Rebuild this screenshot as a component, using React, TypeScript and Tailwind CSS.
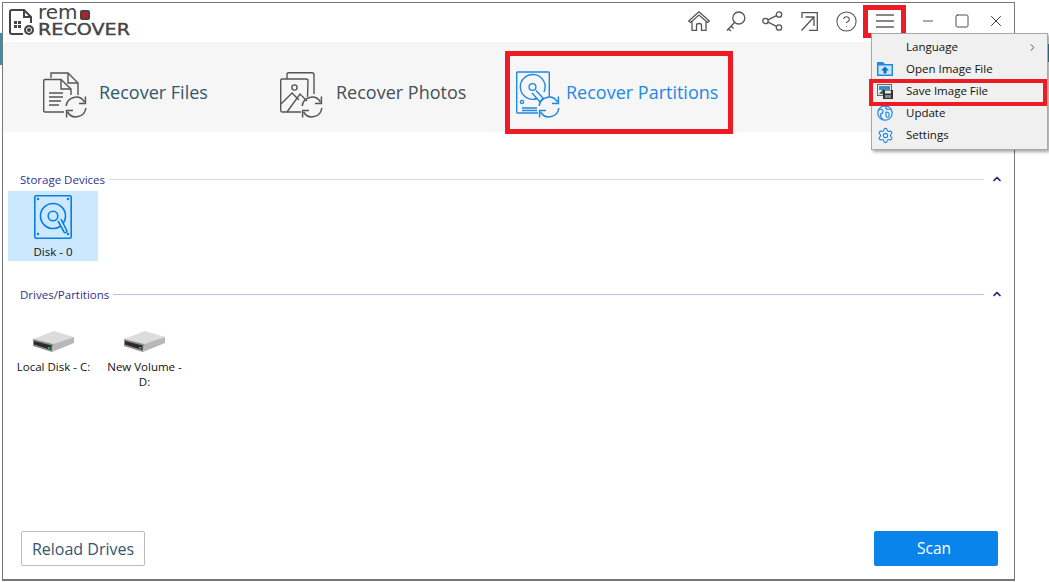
import React from 'react';
import { ChevronRight, ChevronUp, CircleHelp, Minus, Settings, Square, X } from 'lucide-react';

const font = "font-['Open_Sans','Noto_Sans',sans-serif]";

function Sync({ cx, cy, r, color }: { cx: number; cy: number; r: number; color: string }) {
  return (
    <g transform={`translate(${cx} ${cy}) scale(${r / 10})`} fill="none" stroke={color} strokeWidth="1.5">
      <path d="M-9.8 -1 A9.8 9.8 0 0 1 8.4 -5" />
      <path d="M9.4 -10.5 V-3.4 H3" />
      <path d="M9.8 1 A9.8 9.8 0 0 1 -8.4 5" />
      <path d="M-9.4 10.5 V3.4 H-3" />
    </g>
  );
}

function FilesIcon() {
  return (
    <svg width="44" height="46" viewBox="0 0 44 46" fill="none" stroke="#555" strokeWidth="1.4" className="mt-[5px] shrink-0">
      <path d="M8 6 V1 H25 L35 11 V23" />
      <path d="M25 1 V11 H35" />
      <path d="M21 40 H2 Q0.7 40 0.7 38 V9 Q0.7 7.5 2 7.5 H18 L28 17 V23" />
      <path d="M18 7.5 V17 H28" />
      <path d="M6 21 H20 M6 25 H20 M6 29 H18 M6 33 H16" />
      <Sync cx={33} cy={35} r={10} color="#555" />
    </svg>
  );
}

function PhotosIcon() {
  return (
    <svg width="44" height="46" viewBox="0 0 44 46" fill="none" stroke="#555" strokeWidth="1.4" className="mt-[5px] shrink-0">
      <path d="M7 7 V2 Q7 0.7 8.5 0.7 H32 Q34 0.7 34 2.5 V22" />
      <path d="M27.5 25 L28 8.5 Q28 7 26 7 H2 Q0.7 7 0.7 8.5 V38 Q0.7 40 2 40 H21" />
      <path d="M1 32 L12 21 L19 28 M7 40 L20 22 L27 29" />
      <circle cx="14.5" cy="15.5" r="2.6" />
      <Sync cx={32} cy={35} r={10} color="#555" />
    </svg>
  );
}

function PartitionIcon() {
  return (
    <svg width="45" height="48" viewBox="0 0 45 48" fill="none" stroke="#1e88e5" strokeWidth="1.4" className="mt-[5px] shrink-0">
      <path d="M22 42 H1.5 Q0.7 42 0.7 41 V2 Q0.7 1 1.5 1 H32.5 Q33.3 1 33.3 2 V26" />
      <path d="M21 27.5 A12.4 12.4 0 1 1 28 21" />
      <circle cx="16.5" cy="16" r="3.4" />
      <path d="M16 22 L24 31 L27 27 L20 19.5" />
      <circle cx="6" cy="31" r="1.6" />
      <path d="M6 37 H21 M6 39.5 H21" />
      <Sync cx={33} cy={36} r={10} color="#1e88e5" />
    </svg>
  );
}

function DiskIcon() {
  return (
    <svg width="38" height="44" viewBox="0 0 38 44" fill="none" stroke="#0b7de0" strokeWidth="1.6">
      <rect x="0.8" y="0.8" width="36.4" height="42.4" rx="1.5" />
      <circle cx="19" cy="21" r="12.5" />
      <circle cx="19" cy="21" r="4.8" />
      <path d="M24 26 L30 37 Q32 39 33 36 L27 24" fill="#cce8ff" />
      <g fill="#0b7de0" stroke="none">
        <circle cx="4" cy="4" r="1.2" />
        <circle cx="34" cy="4" r="1.2" />
        <circle cx="4" cy="39" r="1.2" />
        <circle cx="34" cy="39" r="1.2" />
      </g>
    </svg>
  );
}

function DriveIcon() {
  return (
    <svg width="42" height="23" viewBox="0 0 42 23">
      <path d="M0 8 L21 0 L41 6 L20 13 Z" fill="#dcdcdc" />
      <path d="M41 6 V12 L19 21 L20 13 Z" fill="#b8b8b8" />
      <path d="M0 8 L20 13 L19 21 L0 15 Z" fill="#8a8a8a" />
      <path d="M1 10 L18.5 14.5 V19 L1 13.5 Z" fill="#2a2a2a" />
      <rect x="15" y="16" width="2.5" height="1.6" fill="#22c03c" />
    </svg>
  );
}

function HomeIcon() {
  return (
    <svg width="22" height="20" viewBox="0 0 22 20" fill="none" stroke="#555" strokeWidth="1.3">
      <path d="M0.7 10 L11 0.8 L21.3 10 L19.5 11.5 L11 4 L2.5 11.5 Z" />
      <path d="M4 10 V19.3 H8.5 V14 Q8.5 12.5 11 12.5 Q13.5 12.5 13.5 14 V19.3 H18 V10" />
    </svg>
  );
}

function KeyIcon() {
  return (
    <svg width="20" height="21" viewBox="0 0 20 21" fill="none" stroke="#555" strokeWidth="1.3">
      <circle cx="12.8" cy="7" r="6" />
      <path d="M8.5 11.5 L1 19.5 M2.5 18 L5 20 M5 15 L7.5 17.5" />
    </svg>
  );
}

function ShareIcon() {
  return (
    <svg width="21" height="20" viewBox="0 0 21 20" fill="none" stroke="#555" strokeWidth="1.3">
      <circle cx="3.5" cy="10" r="2.7" />
      <circle cx="17" cy="3.5" r="2.7" />
      <circle cx="17" cy="16.5" r="2.7" />
      <path d="M6 8.8 L14.5 4.7 M6 11.2 L14.5 15.3" />
    </svg>
  );
}

function ExportIcon() {
  return (
    <svg width="17" height="19" viewBox="0 0 17 19" fill="none" stroke="#555" strokeWidth="1.3">
      <path d="M1 6 V0.7 H16.3 V18.3 H8" />
      <path d="M0.5 18.5 L13 5 M4.5 5 H13 V14" />
    </svg>
  );
}

function FolderUpIcon() {
  return (
    <svg width="16" height="16" viewBox="0 0 16 16">
      <path d="M0 1 H6 L8 3 H16 V15 H0 Z" fill="#1e88e5" />
      <rect x="1.5" y="4.5" width="13" height="9" fill="#cfe6fa" />
      <path d="M8 5.5 L12 9.5 H9.5 V12.5 H6.5 V9.5 H4 Z" fill="#0b6fd0" />
    </svg>
  );
}

function SaveImageIcon() {
  return (
    <svg width="16" height="15" viewBox="0 0 16 15">
      <rect x="0.5" y="0.5" width="14" height="11" fill="#dff0fb" stroke="#8a5a3c" />
      <rect x="2" y="2" width="11" height="4" fill="#3a8fc8" />
      <path d="M2 10 L6 5 L9 8 L13 6 V10 Z" fill="#3b6e4a" />
      <rect x="6" y="6" width="10" height="9" fill="#333" />
      <rect x="8" y="6.5" width="6" height="3" fill="#e8e8e8" />
      <rect x="8" y="11" width="6" height="3" fill="#888" />
    </svg>
  );
}

function GlobeIcon() {
  return (
    <svg width="16" height="16" viewBox="0 0 16 16" fill="none" stroke="#1e88e5" strokeWidth="1.2">
      <circle cx="8" cy="8" r="7.2" />
      <path d="M1.5 5 Q5 3 6 6 Q6 9 3.5 9 Q3 12 6 14.5 M9 1 Q8 4 11 4.5 L14 4 M9 7 Q13 7 12 11 Q10.5 14 9 11 Z" />
    </svg>
  );
}

function SectionHeader({ title, lineColor }: { title: string; lineColor: string }) {
  return (
    <div className="flex items-center h-[18px] pl-[17px] pr-[11px]">
      <span className="text-[11.5px] text-[#2e3192] whitespace-nowrap">{title}</span>
      <div className={`flex-1 h-px ml-[4px] mr-[7px] mb-[2px] ${lineColor}`} />
      <ChevronUp size={12} strokeWidth={3.5} className="text-[#1b2a7a] mb-[2px]" />
    </div>
  );
}

function MenuRow({ label, icon, arrow }: { label: string; icon?: React.ReactNode; arrow?: boolean }) {
  return (
    <div className="flex items-center h-[22px] text-[11.5px] text-[#111]">
      <div className="w-[34px] flex pl-[5px]">{icon}</div>
      <span className="flex-1">{label}</span>
      {arrow && <ChevronRight size={11} className="mr-[9px] text-[#444]" />}
    </div>
  );
}

export default function App() {
  const toolbar = [
    <HomeIcon key="home" />,
    <KeyIcon key="key" />,
    <ShareIcon key="share" />,
    <ExportIcon key="export" />,
    <CircleHelp key="help" size={23} strokeWidth={1.1} className="text-[#555]" />,
  ];

  return (
    <div className={`relative w-[1049px] h-[582px] bg-white overflow-hidden ${font}`}>
      {/* bits of the desktop behind the window */}
      <div className="absolute left-0 top-[33px] w-[2px] h-[32px] bg-[#3e8ea8]" />
      <div className="absolute right-0 top-[44px] w-[2px] h-[18px] bg-[#3e8ea8]" />

      <div className="ml-[2px] mt-[2px] w-[1013px] h-[579px] border border-[#777] border-b-2 flex flex-col bg-white">
        <header className="h-[39px] flex items-center shrink-0 pb-[3px]">
          <div className="flex items-center ml-[6px] mt-[3px] w-[130px]">
            <svg width="29" height="27" viewBox="0 0 29 27" fill="none" className="shrink-0">
              <path d="M14 25 H3 Q1 25 1 23 V3 Q1 1 3 1 H15 L22 8 V14" stroke="#444" strokeWidth="2" />
              <path d="M15 1 V8 H22" stroke="#444" strokeWidth="2" />
              <rect x="5" y="12" width="3" height="3" fill="#444" />
              <rect x="9" y="12" width="3" height="3" fill="#444" />
              <rect x="5" y="16" width="3" height="3" fill="#444" />
              <rect x="9" y="16" width="3" height="3" fill="#444" />
              <circle cx="20" cy="21" r="5" fill="#444" />
              <circle cx="20" cy="21" r="2.5" stroke="#fff" />
            </svg>
            <div className="flex flex-col font-['DejaVu_Sans',sans-serif] text-[#444]">
              <div className="flex items-center h-[13px] text-[20px] leading-[13px]">
                <span className="-translate-y-[3px]">rem</span>
                <span className="ml-[2px] flex items-center justify-center w-[10px] h-[10px] border-2 border-[#444] rounded-[2px] bg-[#b5202a]" />
              </div>
              <span className="mt-[1px] h-[14px] text-[16.5px] leading-[14px] scale-x-[1.16] origin-left whitespace-nowrap [-webkit-text-stroke:0.4px_#444]">RECOVER</span>
            </div>
          </div>
          <div className="flex-1" />
          <div className="flex items-center">
            {toolbar.map((icon, i) => (
              <div key={i} className="w-[37px] flex justify-center">
                {icon}
              </div>
            ))}
          </div>
          <div className="w-[43px] h-[33px] border-[5px] border-[#ed1c24] flex flex-col items-center justify-center gap-[4px] mr-[5px] ml-[-2px]">
            <div className="w-[18px] h-[2px] bg-[#888]" />
            <div className="w-[18px] h-[2px] bg-[#888]" />
            <div className="w-[18px] h-[2px] bg-[#888]" />
          </div>
          <div className="flex items-center pr-[1px]">
            <div className="w-[34px] flex justify-center"><Minus size={16} strokeWidth={1.5} className="text-[#555]" /></div>
            <div className="w-[34px] flex justify-center"><Square size={16} strokeWidth={1.3} className="text-[#333]" /></div>
            <div className="w-[34px] flex justify-center"><X size={18} strokeWidth={1.3} className="text-[#333]" /></div>
          </div>
        </header>

        <nav className="h-[90px] shrink-0 bg-[#f6f6f6] flex items-start text-[18px]">
          <div className="flex items-center h-[90px] pt-[10px] ml-[40px] w-[237px]">
            <FilesIcon />
            <span className="ml-[12px] text-[#31566e]">Recover Files</span>
          </div>
          <div className="flex items-center h-[90px] pt-[10px] w-[225px]">
            <PhotosIcon />
            <span className="ml-[12px] text-[#444f57]">Recover Photos</span>
          </div>
          <div className="flex items-center mt-[9px] h-[83px] w-[228px] border-[5px] border-[#ed1c24] pl-[6px]">
            <PartitionIcon />
            <span className="ml-[5px] text-[#1e88e5] whitespace-nowrap">Recover Partitions</span>
          </div>
        </nav>

        <main className="flex-1 flex flex-col pt-[39px]">
          <SectionHeader title="Storage Devices" lineColor="bg-[#d5dcef]" />
          <div className="ml-[5px] mt-[2px] w-[90px] h-[70px] bg-[#cce8ff] flex flex-col items-center pt-[4px]">
            <DiskIcon />
            <span className="mt-[4px] text-[11.5px] text-[#111]">Disk - 0</span>
          </div>

          <div className="mt-[25px]">
            <SectionHeader title="Drives/Partitions" lineColor="bg-[#b9c2e6]" />
          </div>
          <div className="flex ml-[5px] mt-[27px]">
            <div className="w-[91px] flex flex-col items-center">
              <DriveIcon />
              <span className="mt-[5px] text-[11.5px] leading-[15px] text-[#111] text-center whitespace-nowrap">Local Disk - C:</span>
            </div>
            <div className="w-[91px] flex flex-col items-center">
              <DriveIcon />
              <span className="mt-[5px] text-[11.5px] leading-[15px] text-[#111] text-center">New Volume -<br />D:</span>
            </div>
          </div>

          <div className="mt-auto flex justify-between pl-[18px] pr-[16px] pb-[13px]">
            <button className="w-[124px] h-[35px] bg-white border border-[#bbb] rounded-[2px] text-[16px] text-[#33566e]">Reload Drives</button>
            <button className="w-[124px] h-[35px] bg-[#0984ea] rounded-[2px] pr-[4px] text-[15.5px] text-white">Scan</button>
          </div>
        </main>
      </div>

      {/* dropdown opened from the hamburger button */}
      <div className="absolute left-[871px] top-[33px] w-[177px] h-[117px] bg-[#f0f0f0] border border-[#a8a8a8] shadow-[2px_2px_3px_rgba(0,0,0,0.35)] pt-[2px]">
        <MenuRow label="Language" arrow />
        <MenuRow label="Open Image File" icon={<FolderUpIcon />} />
        <MenuRow label="Save Image File" icon={<SaveImageIcon />} />
        <MenuRow label="Update" icon={<GlobeIcon />} />
        <MenuRow label="Settings" icon={<Settings size={17} strokeWidth={1.6} className="text-[#1e88e5]" />} />
      </div>
      <div className="absolute left-[869px] top-[79px] w-[178px] h-[27px] border-[4px] border-[#ed1c24]" />
    </div>
  );
}
